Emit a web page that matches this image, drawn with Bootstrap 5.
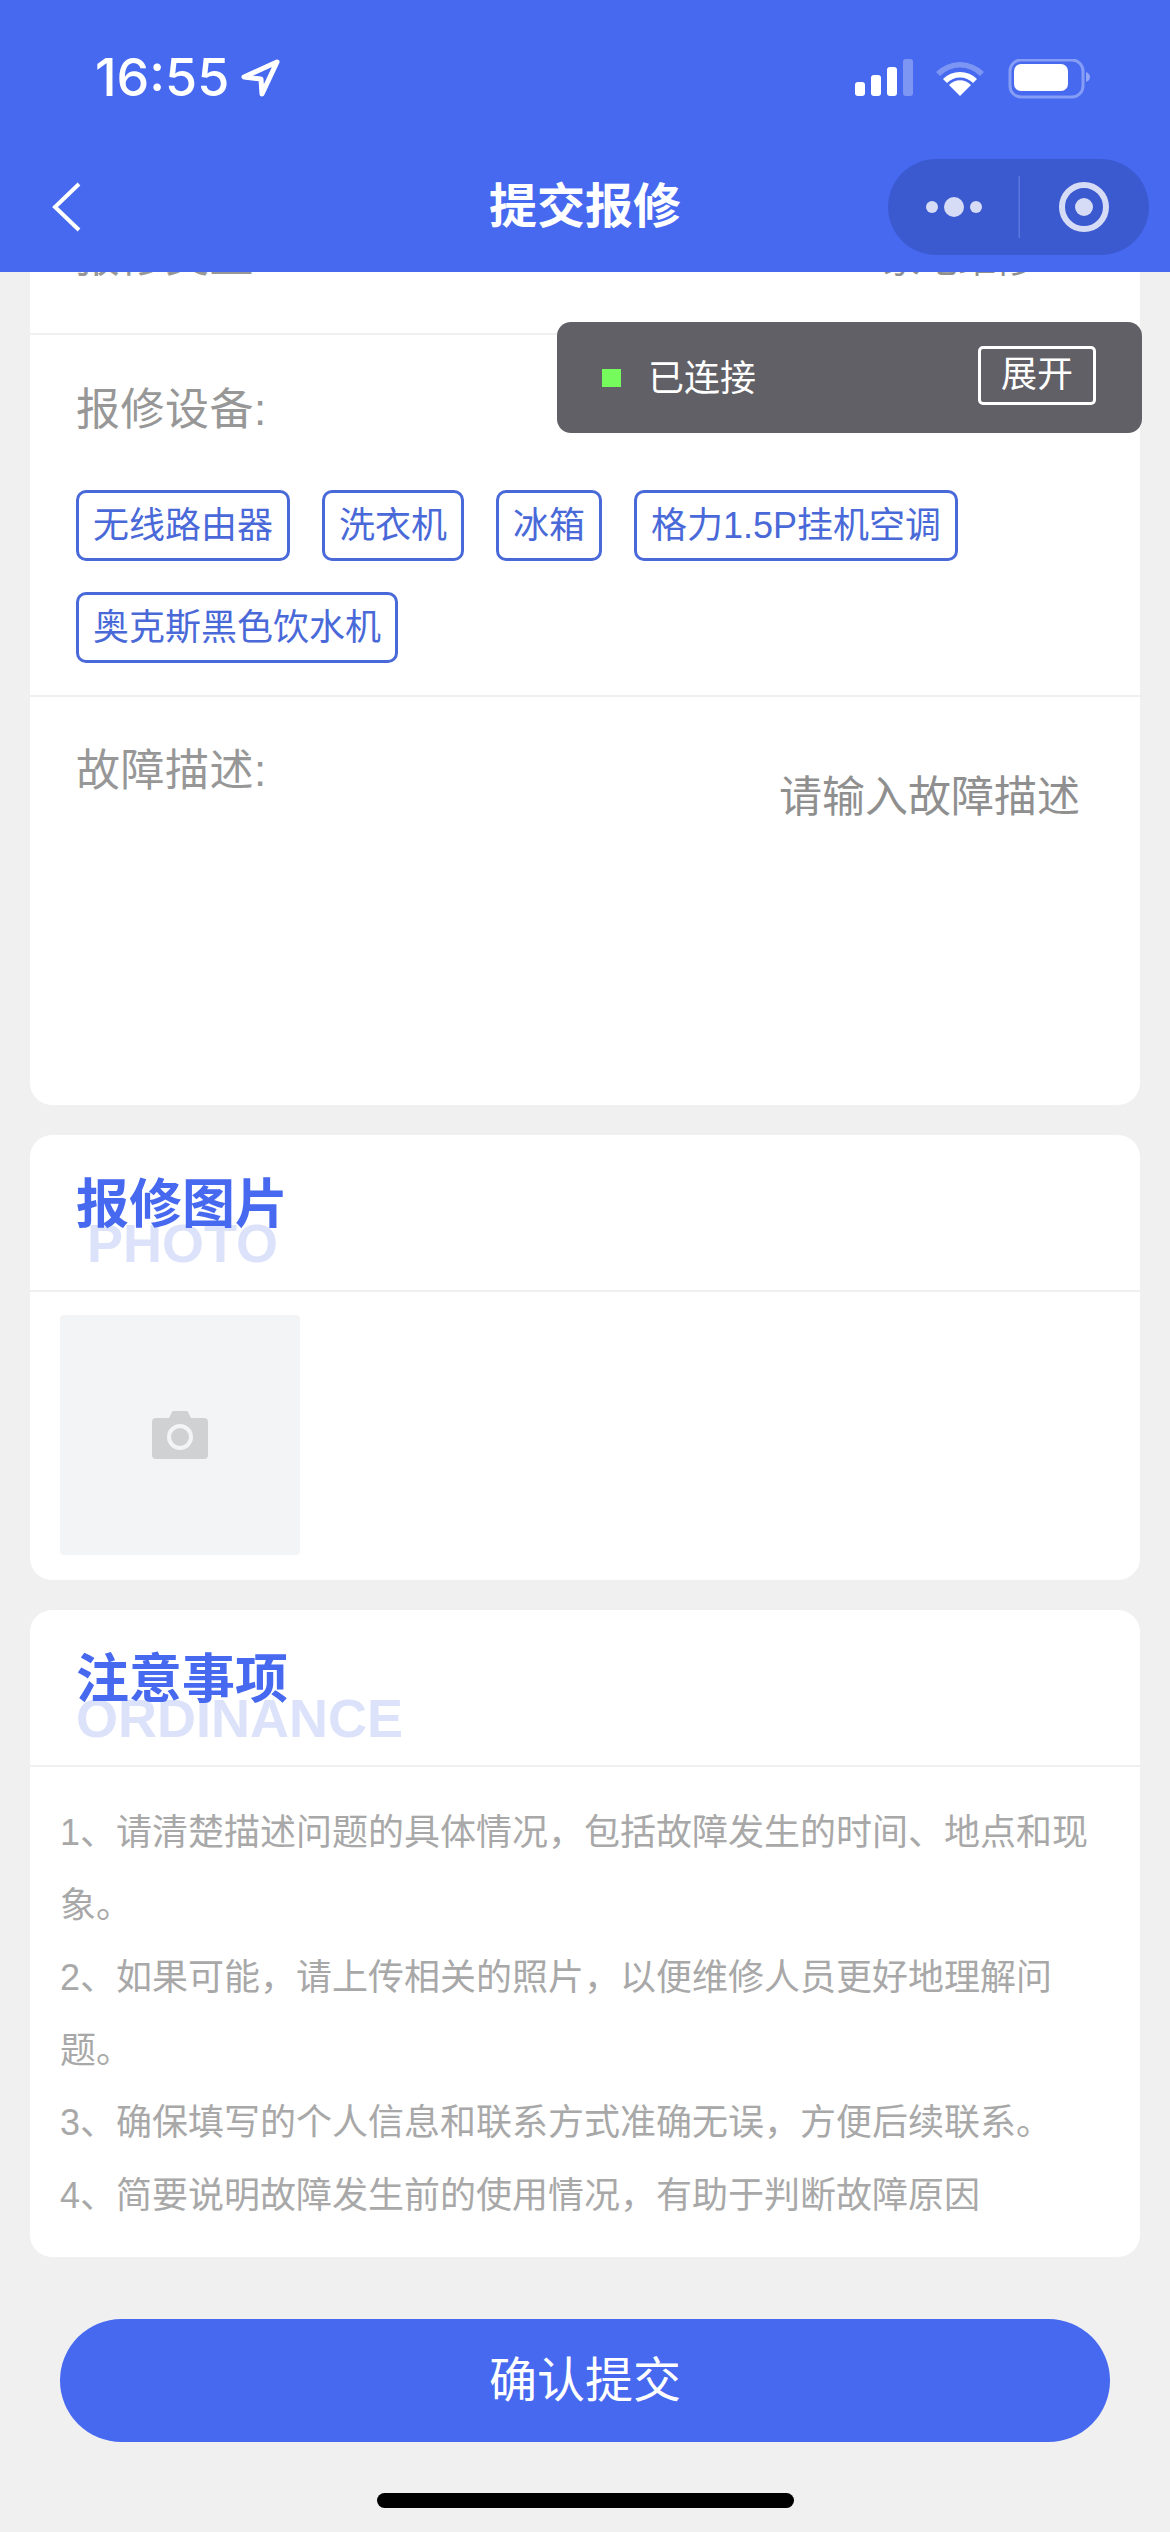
<!DOCTYPE html>
<html lang="zh">

<head>
  <meta charset="UTF-8">
  <meta name="viewport" content="width=device-width, initial-scale=1.0">
  <title>提交报修</title>

  <link href="https://cdn.jsdelivr.net/npm/bootstrap@5.3.0/dist/css/bootstrap.min.css" rel="stylesheet">

  <style>
    html, body {
      margin: 0;
      background-color: #f0f0f0;
    }

    .phone {
      width: 1170px;
      height: 2532px;
      overflow: hidden;
      font-family: "Liberation Sans", "Noto Sans CJK SC", sans-serif;
      background-color: #f0f0f0;
    }

    /* top bar */
    .top-bar {
      height: 272px;
      background-color: #4669f0;
      color: #fff;
      z-index: 2;
    }

    .status-line {
      height: 159px;
      padding: 59px 79px 0 95px;
    }

    .clock {
      font-family: Inter, "Liberation Sans", sans-serif;
      font-size: 52px;
      font-weight: 500;
      line-height: 38px;
    }

    .arrow-icon {
      margin-left: 12px;
    }

    .nav-line {
      height: 96px;
      padding: 0 21px 0 52px;
    }

    .nav-title {
      font-size: 48px;
      font-weight: 700;
      line-height: 96px;
      left: 0;
      right: 0;
      top: 0;
    }

    /* cards */
    .content {
      height: 1987px;
      overflow: hidden;
      padding: 0 30px;
    }

    .sheet {
      background-color: #fff;
      border-radius: 22px;
      margin-bottom: 30px;
    }

    .sheet-first {
      margin-top: -92px;
      height: 925px;
    }

    .form-row {
      padding: 0 46px;
      border-bottom: 2px solid #f0f0f0;
    }

    .row-type {
      height: 155px;
      padding-top: 49px;
    }

    .row-device {
      height: 362px;
      padding-top: 47px;
    }

    .row-desc {
      padding-top: 46px;
      border-bottom: 0;
    }

    .form-label-text {
      font-size: 44px;
      line-height: 56px;
      letter-spacing: .5px;
      color: #979797;
    }

    .type-value {
      font-size: 38px;
      line-height: 60px;
      color: #8f8f8f;
      margin-right: 60px;
    }

    .hint-text {
      font-size: 43px;
      line-height: 56px;
      color: #8f8f8f;
      padding-top: 26px;
      margin-right: 14px;
    }

    .tag-wrap {
      margin-top: 52px;
      column-gap: 32px;
      row-gap: 31px;
    }

    .device-tag {
      height: 71px;
      padding: 0 14px;
      border: 3px solid #4a69d8;
      border-radius: 10px;
      font-size: 36px;
      line-height: 65px;
      color: #4a69d8;
    }

    .sheet-head {
      position: relative;
      height: 157px;
      padding-left: 46px;
      border-bottom: 2px solid #f0f0f0;
    }

    .head-ghost {
      position: absolute;
      font-size: 54px;
      font-weight: 700;
      line-height: 55px;
      color: #dbe2fa;
      top: 81px;
      left: 46px;
    }

    .head-photo .head-ghost {
      left: 57px;
    }

    .head-main {
      position: relative;
      font-size: 53px;
      font-weight: 700;
      line-height: 60px;
      color: #4669f0;
      padding-top: 40px;
    }

    .photo-body {
      height: 288px;
      padding: 23px 30px;
    }

    .photo-tile {
      width: 240px;
      height: 240px;
      background-color: #f3f4f6;
      border-radius: 4px;
    }

    .note-body {
      padding: 30px 30px 0;
      height: 490px;
      font-size: 36px;
      line-height: 72.5px;
      color: #a8a8a8;
    }

    .submit-btn {
      width: 1050px;
      height: 123px;
      margin: 60px 60px 0;
      border: 0;
      border-radius: 62px;
      background-color: #4669f0;
      color: #fff;
      font-size: 48px;
    }

    .submit-btn:hover {
      background-color: #4669f0;
      color: #fff;
    }

    .home-bar {
      width: 417px;
      height: 15px;
      margin: 51px auto 0;
      border-radius: 8px;
      background-color: #000;
    }

    /* debug popup that floats over the page */
    .vconsole-pop {
      position: absolute;
      left: 557px;
      top: 322px;
      width: 585px;
      height: 111px;
      padding: 0 46px 0 45px;
      background-color: #616066;
      border-radius: 14px;
      color: #fff;
      font-size: 36px;
      z-index: 3;
    }

    .green-dot {
      width: 19px;
      height: 18px;
      background-color: #76fb5c;
      margin-right: 27px;
    }

    .pop-label {
      padding-top: 2px;
    }

    .pop-btn {
      width: 118px;
      height: 59px;
      border: 3px solid #fff;
      border-radius: 5px;
      line-height: 51px;
      text-align: center;
      margin-top: -4px;
    }
  </style>
</head>

<body>
  <div class="phone position-relative">
    <header class="top-bar position-relative">
      <div class="status-line d-flex justify-content-between">
        <div class="d-flex">
          <span class="clock">16:55</span>
          <svg class="arrow-icon" width="39" height="38" viewBox="0 0 39 38" fill="none">
            <path d="M36 3 3 18l17 2 1 15Z" stroke="#fff" stroke-width="5" stroke-linejoin="round" />
          </svg>
        </div>
        <svg width="236" height="40" viewBox="0 0 236 40">
          <g fill="#fff">
            <rect x="0" y="23" width="10" height="14" rx="3" />
            <rect x="16" y="16" width="10" height="21" rx="3" />
            <rect x="32" y="8" width="10" height="29" rx="3" />
            <rect x="48" y="0" width="10" height="37" rx="3" opacity=".3" />
            <path d="M105 37 94 26a15 15 0 0 1 22 0Z" />
            <path d="M88 20a24 24 0 0 1 34 0l-4 4a18 18 0 0 0-26 0Z" />
            <path d="M81 13a34 34 0 0 1 48 0l-4 4a28 28 0 0 0-40 0Z" opacity=".3" />
            <rect x="159" y="5" width="54" height="27" rx="7" />
            <path d="M231 13c3 1 4 3 4 5s-1 4-4 5Z" opacity=".4" />
          </g>
          <rect x="155" y="1" width="73" height="37" rx="11" fill="none" stroke="#fff" stroke-opacity=".35" stroke-width="3" />
        </svg>
      </div>
      <nav class="nav-line d-flex justify-content-between align-items-center position-relative">
        <div class="nav-title position-absolute text-center">提交报修</div>
        <svg class="position-relative" width="30" height="50" viewBox="0 0 30 50" fill="none">
          <path d="M27 2 3 25l24 23" stroke="#fff" stroke-width="4" />
        </svg>
        <svg class="position-relative" width="261" height="96" viewBox="0 0 261 96">
          <rect width="261" height="96" rx="48" fill="#3c5ad0" />
          <rect x="130.500" y="17" width="1.500" height="62" fill="#5a76de" />
          <g fill="#d6dcf5">
            <circle cx="44" cy="48" r="6" />
            <circle cx="66" cy="48" r="10" />
            <circle cx="88" cy="48" r="6" />
            <circle cx="196" cy="48" r="9" />
          </g>
          <circle cx="196" cy="48" r="22" fill="none" stroke="#d6dcf5" stroke-width="6" />
        </svg>
      </nav>
    </header>

    <main class="content">
      <section class="sheet sheet-first">
        <div class="form-row row-type d-flex justify-content-between">
          <span class="form-label-text">报修类型</span>
          <span class="type-value">家电维修</span>
        </div>
        <div class="form-row row-device">
          <div class="form-label-text">报修设备:</div>
          <div class="tag-wrap d-flex flex-wrap">
            <span class="device-tag">无线路由器</span>
            <span class="device-tag">洗衣机</span>
            <span class="device-tag">冰箱</span>
            <span class="device-tag">格力1.5P挂机空调</span>
            <span class="device-tag">奥克斯黑色饮水机</span>
          </div>
        </div>
        <div class="form-row row-desc d-flex justify-content-between">
          <span class="form-label-text">故障描述:</span>
          <span class="hint-text">请输入故障描述</span>
        </div>
      </section>

      <section class="sheet">
        <div class="sheet-head head-photo">
          <div class="head-ghost">PHOTO</div>
          <div class="head-main">报修图片</div>
        </div>
        <div class="photo-body">
          <div class="photo-tile d-flex align-items-center justify-content-center">
            <svg width="56" height="48" viewBox="0 0 56 48">
              <path fill="#d0d1d3" fill-rule="evenodd" d="M4 7h13l3-6q.5-1 2-1h12q1.500 0 2 1l3 6h13q4 0 4 4v33q0 4-4 4H4q-4 0-4-4V11q0-4 4-4Zm24 6a13 13 0 1 0 0 26 13 13 0 0 0 0-26Z" />
              <circle cx="28" cy="26" r="9" fill="#d0d1d3" />
            </svg>
          </div>
        </div>
      </section>

      <section class="sheet mb-0">
        <div class="sheet-head head-note">
          <div class="head-ghost">ORDINANCE</div>
          <div class="head-main">注意事项</div>
        </div>
        <div class="note-body">
          <div>1、请清楚描述问题的具体情况，包括故障发生的时间、地点和现象。</div>
          <div>2、如果可能，请上传相关的照片，以便维修人员更好地理解问题。</div>
          <div>3、确保填写的个人信息和联系方式准确无误，方便后续联系。</div>
          <div>4、简要说明故障发生前的使用情况，有助于判断故障原因</div>
        </div>
      </section>
    </main>

    <div class="vconsole-pop d-flex align-items-center">
      <span class="green-dot"></span>
      <span class="pop-label flex-grow-1">已连接</span>
      <span class="pop-btn">展开</span>
    </div>

    <button class="submit-btn btn d-block" type="button">确认提交</button>
    <div class="home-bar"></div>
  </div>

  <script src="https://cdn.jsdelivr.net/npm/bootstrap@5.3.0/dist/js/bootstrap.bundle.min.js"></script>
</body>

</html>
